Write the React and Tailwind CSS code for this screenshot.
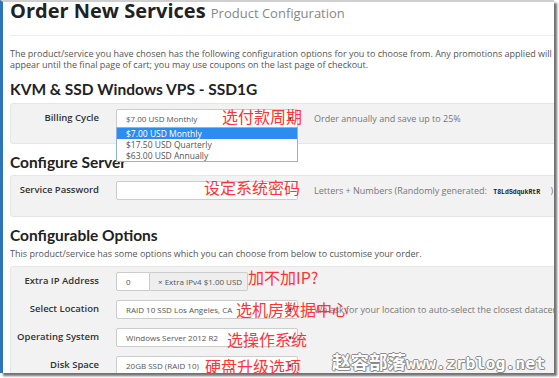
import React from 'react';

const sans = "font-['Open_Sans','Liberation_Sans',sans-serif]";
const head = "font-['Lato','Open_Sans',sans-serif]";
const cjk = "font-['Noto_Sans_CJK_SC',sans-serif]";

const Arrow = () => <span className="text-[6px] text-[#333] leading-none">▼</span>;

const SelectBox = ({ value }) => (
  <div className="w-[182px] h-[19px] shrink-0 flex items-center justify-between bg-white border border-[#ccc] rounded-[2px] pl-[9px] pr-[4px] text-[8px] text-[#555] whitespace-nowrap">
    <span>{value}</span>
    <Arrow />
  </div>
);

const Row = ({ label, children }) => (
  <div className="flex items-center h-[19px]">
    <div className="w-[88px] shrink-0 text-right text-[9.5px] font-semibold text-[#333] whitespace-nowrap">{label}</div>
    <div className="ml-[17px] flex items-center">{children}</div>
  </div>
);

const Help = ({ children }) => (
  <span className="ml-[16px] whitespace-nowrap text-[9px] text-[#777]">{children}</span>
);

const Heading = ({ children, className = '' }) => (
  <h3 className={`${head} text-[15.5px] leading-[20px] font-bold text-[#222] ${className}`}>{children}</h3>
);

const Note = ({ children, className }) => (
  <span className={`absolute ${cjk} text-[16px] leading-none text-[#ff3333] whitespace-nowrap ${className}`}>{children}</span>
);

export default function App() {
  return (
    <div className={`w-[559px] h-[378px] bg-white overflow-hidden ${sans}`}>
      <div className="relative w-[554px] h-[373px] bg-white border-l-[3px] border-t-2 border-l-[#2f74b5] border-t-[#cfcfcf] shadow-[3px_3px_2px_rgba(0,0,0,0.55)] overflow-hidden">
        <div className="pl-[7px] w-[640px]">
          <div className="pb-[13px] border-b border-[#eee] w-[544px]">
            <h1 className="leading-[18px] text-[20px] font-bold text-[#222] whitespace-nowrap">
              Order New Services{' '}
              <small className="text-[13px] font-normal text-[#888]">Product Configuration</small>
            </h1>
          </div>

          <p className="mt-[12px] w-[546px] text-[9px] leading-[11px] text-[#555]">
            The product/service you have chosen has the following configuration options for you to choose from. Any promotions applied will appear until the final page of cart; you may use coupons on the last page of checkout.
          </p>

          <Heading className="mt-[9px]">KVM &amp; SSD Windows VPS - SSD1G</Heading>

          <div className="mt-[4px] h-[41px] pt-[5px] bg-[#f2f2f2] border border-[#e6e6e6] rounded-[3px]">
            <Row label="Billing Cycle">
              <div className="relative">
                <SelectBox value="$7.00 USD Monthly" />
                <div className="absolute left-0 top-[18px] w-[182px] bg-white border border-[#8fb3dc] text-[8.5px] leading-[11px] text-[#555] z-10">
                  <div className="bg-[#2d8cf0] text-white pl-[9px]">$7.00 USD Monthly</div>
                  <div className="pl-[9px]">$17.50 USD Quarterly</div>
                  <div className="pl-[9px]">$63.00 USD Annually</div>
                </div>
              </div>
              <Help>Order annually and save up to 25%</Help>
            </Row>
          </div>

          <Heading className="mt-[8px]">Configure Server</Heading>

          <div className="mt-[3px] h-[42px] pt-[5px] bg-[#f2f2f2] border border-[#e6e6e6] rounded-[3px]">
            <Row label="Service Password">
              <div className="w-[182px] h-[19px] bg-white border border-[#ccc] rounded-[2px]" />
              <Help>
                Letters + Numbers (Randomly generated:{' '}
                <code className="pl-[4px] pr-[8px] text-[6.5px] font-bold text-[#222] font-['Liberation_Mono',monospace]">T8LdSdqukRtR</code>{' '}
                )
              </Help>
            </Row>
          </div>

          <Heading className="mt-[8px]">Configurable Options</Heading>
          <p className="mt-[3px] text-[9px] leading-[11px] text-[#555]">
            This product/service has some options which you can choose from below to customise your order.
          </p>

          <div className="mt-[7px] h-[120px] pt-[5px] flex flex-col gap-[9px] bg-[#f2f2f2] border border-[#e6e6e6] rounded-[3px]">
            <Row label="Extra IP Address">
              <div className="flex h-[19px] text-[8px] text-[#555] whitespace-nowrap">
                <div className="w-[34px] bg-white border border-[#ccc] rounded-l-[2px] pl-[9px] flex items-center">0</div>
                <div className="w-[98px] bg-[#eee] border border-l-0 border-[#ccc] rounded-r-[2px] pl-[8px] flex items-center">× Extra IPv4 $1.00 USD</div>
              </div>
            </Row>
            <Row label="Select Location">
              <SelectBox value="RAID 10 SSD Los Angeles, CA" />
              <Help>We ask for your location to auto-select the closest datacenter</Help>
            </Row>
            <Row label="Operating System">
              <SelectBox value="Windows Server 2012 R2" />
            </Row>
            <Row label="Disk Space">
              <SelectBox value="20GB SSD (RAID 10)" />
            </Row>
          </div>
        </div>

        <Note className="left-[219px] top-[106px]">选付款周期</Note>
        <Note className="left-[201px] top-[177px]">设定系统密码</Note>
        <Note className="left-[245px] top-[267px]">加不加IP?</Note>
        <Note className="left-[233px] top-[299px]">选机房数据中心</Note>
        <Note className="left-[224px] top-[329px]">选操作系统</Note>
        <Note className="left-[202px] top-[356px]">硬盘升级选项</Note>

        <div className="absolute left-[329px] top-[350px] whitespace-nowrap text-white font-bold leading-none [text-shadow:1px_0_#8a8a8a,-1px_0_#8a8a8a,0_1px_#8a8a8a,0_-1px_#8a8a8a,1px_1px_#9ab]">
          <span className={`${cjk} text-[18.5px]`}>赵容部落</span>
          <span className="text-[16.5px] font-['DejaVu_Sans_Mono',monospace]">www.zrblog.net</span>
        </div>
      </div>
    </div>
  );
}
